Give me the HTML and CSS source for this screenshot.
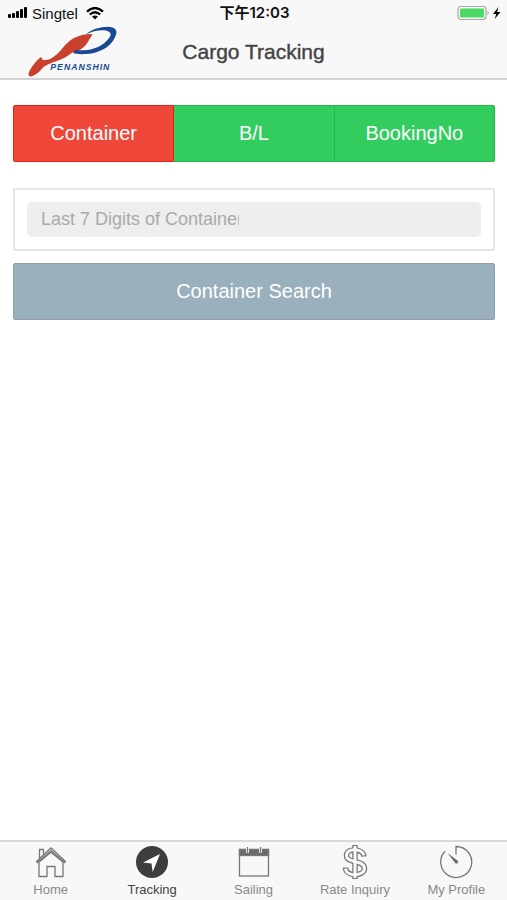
FILE: index.html
```html
<!DOCTYPE html>
<html lang="en">
<head>
    <meta charset="UTF-8">
    <meta name="viewport" content="width=device-width, initial-scale=1.0">
    <title>Cargo Tracking</title>
    <link rel="stylesheet" href="styles.css">
</head>
<body>
    <header class="header">
        <div class="status-bar">
            <div class="carrier">
                <svg width="20" height="12" viewBox="0 0 20 12" aria-hidden="true">
                    <rect x="0" y="7" width="3" height="4" rx="1"/>
                    <rect x="4" y="6" width="3" height="5" rx="1"/>
                    <rect x="8" y="4" width="3" height="7" rx="1"/>
                    <rect x="12" y="2" width="3" height="9" rx="1"/>
                    <rect x="16" y="0" width="3" height="11" rx="1"/>
                </svg>
                <span>Singtel</span>
                <svg class="wifi" width="18" height="13" viewBox="0 0 18 13" aria-hidden="true">
                    <path d="M1 4.6 Q9 -2.4 17 4.6" fill="none" stroke="#000" stroke-width="2.4"/>
                    <path d="M3.8 7.5 Q9 3 14.2 7.5" fill="none" stroke="#000" stroke-width="2.3"/>
                    <path d="M6 9.6 Q9 7.2 12 9.6 L9 12.6 Z"/>
                </svg>
            </div>
            <div class="clock">下午12:03</div>
            <div class="battery">
                <svg width="44" height="14" viewBox="0 0 44 14" aria-hidden="true">
                    <rect x="1" y="0.5" width="28" height="13" rx="3" fill="#f3f8f3" stroke="#a9a9a9" stroke-width="1.2"/>
                    <rect x="3" y="2.5" width="24" height="9" rx="1" fill="#4cd964"/>
                    <path d="M30.5 4.8 Q33 7 30.5 9.2 Z" fill="#a9a9a9"/>
                    <path d="M41.5 1 L36 8 L39.3 8 L37.6 13 L43.5 6 L40 6 Z"/>
                </svg>
            </div>
        </div>
        <div class="title-bar">
            <svg class="logo" width="91" height="52" viewBox="81 78 273 156" role="img" aria-label="Penanshin">
                <path fill="#c9402f" d="M278 102 C254 102 236 107 222 114 C208 122 198 132 190 142 C178 157 166 169 152 176 C142 180 134 181 129 180 L123 171 C106 184 92 204 86 219 C84 228 90 231 98 228 C110 223 121 213 128 204 C136 195 150 190 172 182 C192 175 206 166 216 158 C234 153 252 146 262 128 Z"/>
                <path fill="#174a92" fill-rule="evenodd" d="M257 104 C272 88 300 80 324 80 C346 81 353 92 348 104 C338 136 306 156 268 161 C248 163 232 163 220 160 L225 150 C256 154 292 147 314 128 C330 114 337 103 328 96 C316 87 284 90 257 104 Z"/>
                <text class="logo-text" x="151" y="209">PENANSHIN</text>
            </svg>
            <h1>Cargo Tracking</h1>
        </div>
    </header>

    <main class="content">
        <div class="button-bar">
            <button type="button" class="button active">Container</button>
            <button type="button" class="button">B/L</button>
            <button type="button" class="button">BookingNo</button>
        </div>

        <form class="search-form">
            <div class="search-card">
                <label class="search-field">
                    <input type="text" placeholder="Last 7 Digits of Container" aria-label="Last 7 Digits of Container">
                </label>
            </div>
            <button type="button" class="button search-btn">Container Search</button>
        </form>
    </main>

    <nav class="tabs">
        <a href="#" class="tab">
            <svg width="34" height="34" viewBox="0 0 34 34" aria-hidden="true">
                <path d="M2.5 16.5 L17 3 L31.5 16.5 L30.5 17.6 L17 5.6 L3.5 17.6 Z"/>
                <path d="M5.5 13.5 V4.5 H9.5 V10"/>
                <path d="M5 17 V31.5 H13 V21.5 H21 V31.5 H29 V17 L17 7.2 Z"/>
            </svg>
            <span>Home</span>
        </a>
        <a href="#" class="tab active">
            <svg width="34" height="34" viewBox="0 0 34 34" aria-hidden="true">
                <circle cx="17" cy="17" r="16" fill="#3d3d3d" stroke="none"/>
                <path d="M25 9 L17.7 27 L16.5 18.5 L8 17.5 Z" fill="#fff" stroke="none"/>
            </svg>
            <span>Tracking</span>
        </a>
        <a href="#" class="tab">
            <svg width="34" height="34" viewBox="0 0 34 34" aria-hidden="true">
                <rect x="2.5" y="4.5" width="29" height="26.5"/>
                <rect x="2.5" y="4.5" width="29" height="6" fill="#6b6b6b"/>
                <path d="M10.5 3 V8 M23.5 3 V8" stroke="#f8f8f8" stroke-width="3"/>
                <path d="M10.5 2 V8 M23.5 2 V8"/>
            </svg>
            <span>Sailing</span>
        </a>
        <a href="#" class="tab">
            <svg width="34" height="36" viewBox="0 0 34 36" aria-hidden="true">
                <g class="dollar-outer">
                    <path d="M17 1 V35"/>
                    <path d="M26 12.5 C25.5 4.5 8.5 3.5 8.5 11.5 C8.5 20 26.5 15.5 26.5 24.5 C26.5 32.5 7.5 33 7.5 23.5"/>
                </g>
                <g class="dollar-inner">
                    <path d="M17 2 V34"/>
                    <path d="M25.9 11.4 C24.5 4.5 8.5 3.5 8.5 11.5 C8.5 20 26.5 15.5 26.5 24.5 C26.5 32.5 8.3 33 7.6 24.6"/>
                </g>
            </svg>
            <span>Rate Inquiry</span>
        </a>
        <a href="#" class="tab">
            <svg width="34" height="34" viewBox="0 0 34 34" aria-hidden="true">
                <path d="M17 9.5 V1.5 A15.5 15.5 0 1 1 6 6.3"/>
                <path d="M8.5 8 L19 16 Q19.5 19 16.5 18.5 Z" fill="#6b6b6b" stroke="none"/>
            </svg>
            <span>My Profile</span>
        </a>
    </nav>
</body>
</html>
```

FILE: styles.css
```css
* {
    margin: 0;
    padding: 0;
    box-sizing: border-box;
}

body {
    font-family: "Liberation Sans", "Noto Sans CJK SC", sans-serif;
    background: #fff;
    color: #444;
    min-height: 100vh;
    display: flex;
    flex-direction: column;
}

.header {
    background: #f8f8f8;
    border-bottom: 2px solid #d2d2d2;
}

.status-bar {
    display: grid;
    grid-template-columns: 1fr auto 1fr;
    align-items: center;
    height: 26px;
    padding: 0 6px 0 8px;
    color: #111;
    font-size: 15px;
}

.carrier {
    display: flex;
    align-items: center;
    gap: 4px;
}

.wifi {
    margin-left: 4px;
}

.clock {
    font-family: Inter, "Noto Sans CJK SC", sans-serif;
    font-size: 15px;
    font-weight: 600;
    line-height: 20px;
}

.battery {
    display: flex;
    justify-content: flex-end;
}

.title-bar {
    display: grid;
    grid-template-columns: 1fr auto 1fr;
    align-items: center;
    height: 52px;
    padding: 0 27px;
}

.logo-text {
    fill: #174a92;
    font-size: 26px;
    font-weight: bold;
    font-style: italic;
    letter-spacing: 3px;
}

h1 {
    font-size: 21px;
    font-weight: normal;
    -webkit-text-stroke: 0.4px #444;
}

.content {
    flex: 1;
    padding: 25px 12px 12px 13px;
}

.button-bar {
    display: flex;
}

.button {
    flex: 1;
    height: 57px;
    border: 1px solid #28b54c;
    border-left-width: 0;
    background: #33cd5f;
    color: #fff;
    font-family: inherit;
    font-size: 20px;
    cursor: pointer;
}

.button-bar .button:first-child {
    border-left-width: 1px;
    border-radius: 2px 0 0 2px;
}

.button-bar .button:last-child {
    border-radius: 0 2px 2px 0;
}

.button-bar .button.active {
    background: #ef473a;
    border-color: #e42112;
}

.search-form {
    margin-top: 26px;
}

.search-card {
    padding: 12px;
    border: 2px solid #e6e6e6;
    border-radius: 2px;
}

.search-field {
    display: block;
    height: 35px;
    padding: 0 14px;
    border-radius: 5px;
    background: #eee;
}

.search-field input {
    width: 198px;
    height: 34px;
    border: none;
    outline: none;
    background: transparent;
    font-family: inherit;
    font-size: 18px;
}

.search-field input::placeholder {
    color: #aaa;
}

.search-btn {
    width: 100%;
    margin-top: 12px;
    border: 1px solid #929fa5;
    border-radius: 2px;
    background: #9ab0bc;
}

.tabs {
    display: flex;
    height: 60px;
    border-top: 2px solid #d8d8d8;
    background: #f8f8f8;
}

.tab {
    flex: 1;
    display: flex;
    flex-direction: column;
    align-items: center;
    justify-content: space-between;
    padding: 2px 0 3px;
    color: #888;
    font-size: 13px;
    line-height: 15px;
    text-decoration: none;
}

.tab svg {
    height: 36px;
    fill: none;
    stroke: #777;
    stroke-width: 1.3;
}

.tab.active {
    color: #444;
}

.tab .dollar-outer {
    stroke-width: 5.5;
}

.tab .dollar-inner {
    stroke: #f8f8f8;
    stroke-width: 3;
}
```
